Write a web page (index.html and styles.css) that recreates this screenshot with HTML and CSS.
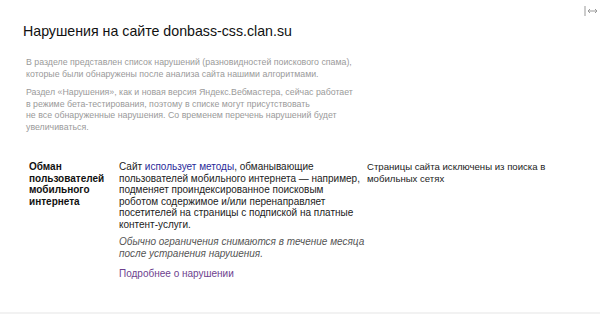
FILE: index.html
```html
<!DOCTYPE html>
<html lang="ru">

<head>
    <meta charset="UTF-8">
    <title>Нарушения на сайте</title>
    <link rel="stylesheet" href="styles.css">
</head>

<body>
    <div class="page">
        <div class="top-bar">
            <span class="expand-icon">
                <svg width="14" height="10" viewBox="0 0 14 10">
                    <line x1="1" y1="0" x2="1" y2="10" stroke="#999" stroke-width="1"/>
                    <line x1="4" y1="5" x2="13" y2="5" stroke="#999" stroke-width="1"/>
                    <path d="M6 3 L4 5 L6 7 M11 3 L13 5 L11 7" fill="none" stroke="#999" stroke-width="1"/>
                </svg>
            </span>
        </div>

        <h1 class="page-title">Нарушения на сайте donbass-css.clan.su</h1>

        <div class="intro">
            <p>В разделе представлен список нарушений (разновидностей поискового спама),<br>
                которые были обнаружены после анализа сайта нашими алгоритмами.</p>
            <p>Раздел «Нарушения», как и новая версия Яндекс.Вебмастера, сейчас работает<br>
                в режиме бета-тестирования, поэтому в списке могут присутствовать<br>
                не все обнаруженные нарушения. Со временем перечень нарушений будет<br>
                увеличиваться.</p>
        </div>

        <div class="violation">
            <div class="violation-name">Обман пользователей мобильного интернета</div>
            <div class="violation-desc">
                <p class="desc-text">Сайт <a class="link" href="#">использует методы</a>, обманывающие<br>
                    пользователей мобильного интернета — например,<br>
                    подменяет проиндексированное поисковым<br>
                    роботом содержимое и/или перенаправляет<br>
                    посетителей на страницы с подпиской на платные<br>
                    контент-услуги.</p>
                <p class="note">Обычно ограничения снимаются в течение месяца<br>
                    после устранения нарушения.</p>
                <p><a class="more-link" href="#">Подробнее о нарушении</a></p>
            </div>
            <div class="violation-effect">Страницы сайта исключены из поиска в<br>мобильных сетях</div>
        </div>
    </div>
</body>

</html>
```

FILE: styles.css
```css
body {
    margin: 0;
    background-color: #fff;
    font-family: Arial, "Liberation Sans", sans-serif;
    color: #222;
}

.page {
    height: 312px;
    border-bottom: 2px solid #f2f2f2;
    padding: 0 0 0 23px;
}

.top-bar {
    display: flex;
    justify-content: flex-end;
    height: 18px;
    padding-right: 2px;
}

.expand-icon {
    margin-top: 2px;
}

.page-title {
    margin: 3px 0 0 0;
    font-size: 14.2px;
    font-weight: normal;
    color: #111;
    line-height: 20px;
}

.intro {
    margin: 16px 0 0 3px;
    font-size: 8.8px;
    line-height: 11.5px;
    color: #9a9a9a;
}

.intro p {
    margin: 0 0 7px 0;
}

.violation {
    display: flex;
    margin-top: 28px;
    font-size: 10px;
    line-height: 11.5px;
}

.violation-name {
    width: 90px;
    padding-left: 6px;
    font-weight: bold;
    color: #111;
}

.violation-desc {
    width: 248px;
    color: #222;
}

.violation-desc p {
    margin: 0;
}

.desc-text {
    padding-bottom: 6px;
}

.note {
    padding-bottom: 8.5px;
    font-style: italic;
    color: #555;
}

.link {
    color: #2b2b9a;
    text-decoration: none;
}

.more-link {
    color: #6e3f8e;
    text-decoration: none;
}

.violation-effect {
    font-size: 9.6px;
    color: #222;
}
```
